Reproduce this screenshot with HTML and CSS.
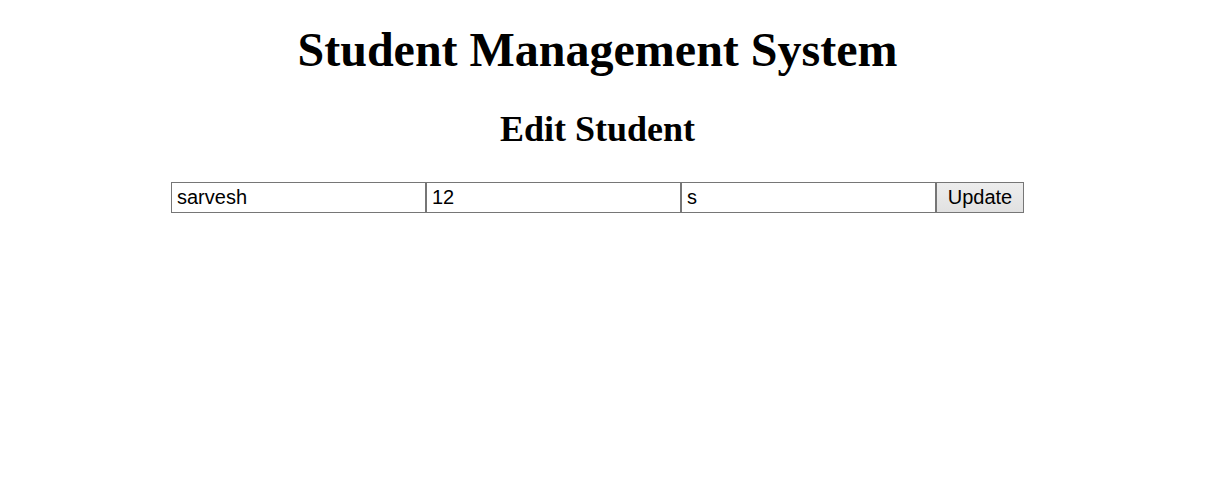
FILE: index.html
```html
<!DOCTYPE html>
<html>
<head>
<meta charset="utf-8">
<title>Student Management System</title>
<link rel="stylesheet" href="styles.css">
</head>
<body>
<div class="page">
  <h1 class="title">Student Management System</h1>
  <h2 class="subtitle">Edit Student</h2>
  <form class="edit-form">
    <input class="field" type="text" value="sarvesh">
    <input class="field" type="text" value="12">
    <input class="field" type="text" value="s">
    <button class="btn" type="button">Update</button>
  </form>
</div>
</body>
</html>
```
FILE: styles.css
```css
html, body {
  margin: 0;
  padding: 0;
  background: #fff;
}
.page {
  width: 1195px;
  text-align: center;
  font-family: "Liberation Serif", "Times New Roman", serif;
  color: #000;
}
.title {
  font-size: 48px;
  font-weight: bold;
  margin: 0;
  padding-top: 22px;
  line-height: 55px;
}
.subtitle {
  font-size: 36px;
  font-weight: bold;
  margin: 0;
  padding-top: 32px;
  line-height: 41px;
}
.edit-form {
  display: flex;
  justify-content: center;
  margin-top: 32px;
}
.field {
  box-sizing: border-box;
  width: 255px;
  height: 31px;
  border: 1px solid #767676;
  margin: 0;
  padding: 1px 5px;
  font-family: "Liberation Sans", Arial, sans-serif;
  font-size: 20px;
  color: #000;
  background: #fff;
}
.btn {
  box-sizing: border-box;
  width: 88px;
  height: 31px;
  border: 1px solid #767676;
  margin: 0;
  padding: 1px 9px;
  font-family: "Liberation Sans", Arial, sans-serif;
  font-size: 20px;
  color: #000;
  background: #e9e9ed;
  background: linear-gradient(#ededed, #e1e1e1);
}
```
